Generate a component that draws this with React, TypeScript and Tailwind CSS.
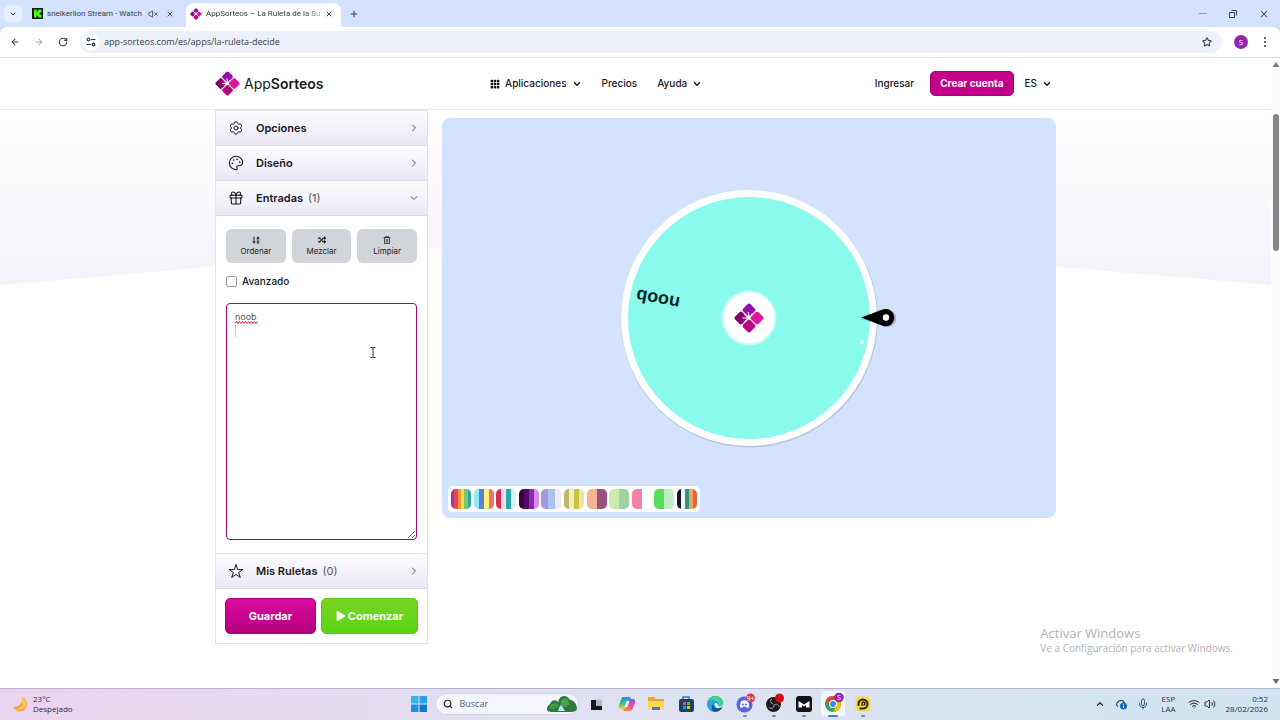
import { useState } from "react"
import type { ReactNode } from "react"
import { ArrowLeft, ArrowRight, ChevronDown, ChevronUp, ChevronRight, Gift, Mic, Palette, Plus, RotateCw, Search, Star, Volume2, VolumeX, Wifi, X } from "lucide-react"
import { BsGrid3X3GapFill } from "react-icons/bs"
import { FaPlay, FaRandom, FaRegTrashAlt, FaSortAlphaDown } from "react-icons/fa"
import { HiOutlineCog6Tooth } from "react-icons/hi2"
import { IoStarOutline } from "react-icons/io5"

const palettes = [
  ["#8e3fa0", "#e8455a", "#f49a3e", "#f3e04e", "#7fc765", "#2c9fb0"],
  ["#8fe9f2", "#5a7fd6", "#fff07a", "#e8736c"],
  ["#d62d50", "#f4dfe6", "#2ba9b0", "#d9f1f0"],
  ["#3a0340", "#540a62", "#8a2bb0", "#dc8af0"],
  ["#9a9bdc", "#a9c2f0", "#f0e9f6"],
  ["#bfb869", "#f2eebc", "#c9c243", "#ece8a4"],
  ["#f5b490", "#994f7c"],
  ["#cdeab0", "#a0d3a2"],
  ["#f582a8", "#ffffff"],
  ["#5bdc5e", "#c0eec2"],
  ["#12182b", "#f4f6f2", "#2c9585", "#f0a35c", "#e2663f"],
]

function Logo({ className }: { className: string }) {
  return (
    <svg viewBox="0 0 50 50" className={className} aria-hidden="true">
      <defs>
        <linearGradient id="logoTop" x1="0" y1="0" x2="1" y2="1">
          <stop offset="0" stopColor="#8c0aa6" />
          <stop offset="1" stopColor="#a30fc0" />
        </linearGradient>
        <linearGradient id="logoLeft" x1="0" y1="1" x2="1" y2="0">
          <stop offset="0" stopColor="#6c0660" />
          <stop offset="1" stopColor="#9a0a8c" />
        </linearGradient>
      </defs>
      <g transform="rotate(45 25 25)">
        <rect x="7" y="7" width="17" height="17" rx="3.500" fill="url(#logoTop)" />
        <rect x="26" y="7" width="17" height="17" rx="3.500" fill="#e0149c" />
        <rect x="26" y="26" width="17" height="17" rx="3.500" fill="#b5077f" />
        <rect x="7" y="26" width="17" height="17" rx="3.500" fill="url(#logoLeft)" />
      </g>
      <path d="M25 25 24 15M25 25 31 18M25 25 17 18M25 25 14 25M25 25 18 31" stroke="#fff" strokeWidth="2" />
      <circle cx="24" cy="24" r="3" fill="#fff" />
    </svg>
  )
}

function BrowserBar() {
  return (
    <div className="shrink-0 bg-[#d3e3fd] font-['Open_Sans',sans-serif] text-[#3a3f47]">
      <div className="flex h-[27px] items-center pr-[11px]">
        <button aria-label="Buscar pestañas" className="ml-1 flex h-[18px] w-[18px] items-center justify-center rounded-md bg-[#e6effd]">
          <ChevronDown className="h-2 w-2" strokeWidth={3} />
        </button>
        <div className="ml-2.5 flex w-[142px] items-center">
          <svg viewBox="0 0 11 11" className="h-[11px] w-[11px] shrink-0">
            <rect width="11" height="11" fill="#0d1a0b" />
            <path d="M2 1.500h2.500v2h1v-1h1v-1h3v2.500h-1v1h-1v1h1v1h1v2.500h-3v-1h-1v-1h-1v2H2z" fill="#53fc18" />
          </svg>
          <span className="ml-1 whitespace-nowrap font-['Roboto',sans-serif] text-[8px]">snelkerlion Stream - Watch</span>
          <VolumeX className="ml-1.5 h-2.5 w-2.5 shrink-0" />
          <button aria-label="Cerrar pestaña" className="ml-auto">
            <X className="h-2 w-2" strokeWidth={3} />
          </button>
        </div>
        <div className="ml-3 flex h-6 w-[155px] items-center self-end rounded-t-lg bg-white pr-2 pb-0.5 pl-1">
          <Logo className="h-3 w-3 shrink-0" />
          <span className="ml-1 bg-linear-to-r from-[#2a2d33] from-85% to-[#b9bcc2] bg-clip-text whitespace-nowrap font-['Roboto',sans-serif] text-[8px] text-transparent">AppSorteos – La Ruleta de la Su</span>
          <button aria-label="Cerrar pestaña" className="ml-auto">
            <X className="h-2 w-2" strokeWidth={3} />
          </button>
        </div>
        <button aria-label="Nueva pestaña" className="ml-2">
          <Plus className="h-2.5 w-2.5" strokeWidth={2.5} />
        </button>
        <div className="ml-auto flex items-center gap-[22px]">
          <button aria-label="Minimizar" className="flex h-2 w-2 items-center">
            <span className="h-px w-full bg-[#8f9bb0]" />
          </button>
          <button aria-label="Restaurar">
            <svg viewBox="0 0 8 8" className="h-2 w-2" fill="none" stroke="#333f55">
              <path d="M.5 2.500h5v5h-5zM2.500.5h5v5" />
            </svg>
          </button>
          <button aria-label="Cerrar">
            <X className="h-2.5 w-2.5" strokeWidth={2.5} />
          </button>
        </div>
      </div>
      <div className="flex h-[31px] items-center rounded-t-lg border-b border-[#dcdde0] bg-white pr-3.5 pl-2.5">
        <button aria-label="Atrás"><ArrowLeft className="h-2.5 w-2.5" strokeWidth={2.5} /></button>
        <button aria-label="Adelante" className="ml-3.5 text-[#a9adb5]"><ArrowRight className="h-2.5 w-2.5" strokeWidth={2.5} /></button>
        <button aria-label="Recargar" className="ml-3.5"><RotateCw className="h-2.5 w-2.5" strokeWidth={2.8} /></button>
        <div className="ml-3 flex h-[22px] flex-1 items-center rounded-full bg-[#edf1fa] pr-2.5 pl-0.5">
          <span className="flex h-[18px] w-[18px] items-center justify-center rounded-full bg-white">
            <svg viewBox="0 0 10 10" className="h-2.5 w-2.5" fill="none" stroke="#3a3f47" strokeWidth="1.200">
              <circle cx="2.500" cy="2.500" r="1.400" />
              <path d="M5 2.500h4.500M.5 7.500H5" />
              <circle cx="7.500" cy="7.500" r="1.400" />
            </svg>
          </span>
          <input aria-label="Dirección" defaultValue="app-sorteos.com/es/apps/la-ruleta-decide" className="ml-1 flex-1 bg-transparent text-[9px] outline-none" />
          <button aria-label="Favorito"><Star className="h-2.5 w-2.5" strokeWidth={2.5} /></button>
        </div>
        <button className="ml-3 flex h-[14px] w-[14px] items-center justify-center rounded-full bg-[#9526b0] text-[8px] text-white">S</button>
        <button aria-label="Menú" className="ml-4 flex flex-col gap-0.5">
          <span className="h-0.5 w-0.5 rounded-full bg-[#33363c]" />
          <span className="h-0.5 w-0.5 rounded-full bg-[#33363c]" />
          <span className="h-0.5 w-0.5 rounded-full bg-[#33363c]" />
        </button>
      </div>
    </div>
  )
}

function SiteHeader() {
  return (
    <header className="relative border-b border-[#e6e6e8] bg-white">
      <div className="mx-auto flex h-[51px] max-w-[841px] items-center justify-between pr-1 text-[10px] font-medium">
        <a href="#" className="flex items-center gap-1">
          <Logo className="h-[25px] w-[25px]" />
          <span className="text-[14px] font-normal">App<b className="font-semibold">Sorteos</b></span>
        </a>
        <nav className="mr-1.5 flex items-center gap-5">
          <button className="flex items-center gap-[5px]">
            <BsGrid3X3GapFill className="h-2.5 w-2.5" />
            Aplicaciones
            <ChevronDown className="h-2.5 w-2.5" strokeWidth={3.5} />
          </button>
          <a href="#">Precios</a>
          <button className="flex items-center gap-[5px]">
            Ayuda
            <ChevronDown className="h-2.5 w-2.5" strokeWidth={3.5} />
          </button>
        </nav>
        <div className="flex items-center">
          <a href="#">Ingresar</a>
          <button className="ml-4 h-[25px] rounded-[5px] border border-[#a4006f] bg-[#c4008b] px-[9px] font-bold text-white">Crear cuenta</button>
          <button className="ml-[11px] flex items-center gap-[5px]">
            ES
            <ChevronDown className="h-2.5 w-2.5" strokeWidth={3.5} />
          </button>
        </div>
      </div>
    </header>
  )
}

function SectionRow({ icon, label, count, open }: { icon: ReactNode; label: string; count?: number; open?: boolean }) {
  return (
    <button className="flex h-[35px] w-full items-center border-b border-[#dcd9e8] bg-linear-to-b from-[#fcfcfe] to-[#ebe8f6] pr-[7px] pl-3 text-left">
      {icon}
      <span className="ml-3 text-[11px] font-semibold">{label}</span>
      {count !== undefined && <span className="ml-[5px] text-[11px] text-[#55555c]">({count})</span>}
      {open ? (
        <ChevronDown className="ml-auto h-3 w-3 text-[#5c5c66]" />
      ) : (
        <ChevronRight className="ml-auto h-3 w-3 text-[#5c5c66]" />
      )}
    </button>
  )
}

function ToolButton({ icon, label }: { icon: ReactNode; label: string }) {
  return (
    <button className="flex h-[34px] flex-1 flex-col items-center justify-center gap-0.5 rounded-md bg-[#d1d4d9] text-[8px] leading-[11px] text-[#1f2328]">
      {icon}
      {label}
    </button>
  )
}

function Sidebar() {
  const [entries, setEntries] = useState("noob\n")
  const [advanced, setAdvanced] = useState(false)

  return (
    <aside className="w-[213px] shrink-0 self-start border border-[#e3e2ea] bg-white">
      <SectionRow icon={<HiOutlineCog6Tooth className="h-4 w-4" />} label="Opciones" />
      <SectionRow icon={<Palette className="h-4 w-4" strokeWidth={1.6} />} label="Diseño" />
      <SectionRow icon={<Gift className="h-4 w-4" strokeWidth={1.6} />} label="Entradas" count={1} open />

      <div className="px-2.5 py-[13px]">
        <div className="flex gap-1.5">
          <ToolButton icon={<FaSortAlphaDown className="h-2 w-2" />} label="Ordenar" />
          <ToolButton icon={<FaRandom className="h-2 w-2" />} label="Mezclar" />
          <ToolButton icon={<FaRegTrashAlt className="h-2 w-2" />} label="Limpiar" />
        </div>
        <label className="mt-2.5 flex h-4 items-center gap-[5px] text-[10px] font-medium">
          <input
            type="checkbox"
            checked={advanced}
            onChange={(e) => setAdvanced(e.target.checked)}
            className="h-[11px] w-[11px] appearance-none rounded-xs border border-[#9a9aa0] bg-white checked:bg-[#c4008b]"
          />
          Avanzado
        </label>
        <div className="relative mt-3.5">
          <textarea
            aria-label="Entradas"
            value={entries}
            onChange={(e) => setEntries(e.target.value)}
            spellCheck={false}
            className="block h-[237px] w-full resize-y rounded-[4px] border border-[#a3046f] bg-white px-2 py-1.5 text-[9px] leading-[14px] text-[#55555c] outline-none"
          />
          {/* spelling mark, caret and mouse pointer */}
          <svg viewBox="0 0 24 3" className="absolute top-[18px] left-[9px] h-[3px] w-6" fill="none" stroke="#d0213f">
            <path d="M0 2.500 1.500.5 3 2.500 4.500.5 6 2.500 7.500.5 9 2.500 10.500.5 12 2.500 13.500.5 15 2.500 16.500.5 18 2.500 19.500.5 21 2.500 22.500.5" />
          </svg>
          <span className="absolute top-[22px] left-[9px] h-3 w-px bg-[#c9c9ce]" />
          <svg viewBox="0 0 6 11" className="absolute top-11 left-36 h-[11px] w-1.5" fill="none" stroke="#333">
            <path d="M.5.5h2l.5.5.5-.5h2M3 1v9M.5 10.500h2l.5-.5.5.5h2" />
          </svg>
        </div>
      </div>

      <div className="border-t border-[#e3e2ea]">
        <SectionRow icon={<IoStarOutline className="h-4 w-4" />} label="Mis Ruletas" count={0} />
      </div>
      <div className="flex gap-[5px] px-[9px] py-[9px] text-[11px] font-bold text-white">
        <button className="h-9 w-[91px] rounded-[5px] border border-[#a8037a] bg-linear-to-b from-[#dc0ba0] to-[#b3007c]">Guardar</button>
        <button className="flex h-9 flex-1 items-center justify-center gap-0.5 rounded-[5px] border border-[#62c41d] bg-linear-to-b from-[#79d422] to-[#57d516]">
          <FaPlay className="h-2.5 w-2.5" />
          Comenzar
        </button>
      </div>
    </aside>
  )
}

function Wheel() {
  return (
    <svg viewBox="-150 -132 300 264" className="h-[264px] w-[300px]" role="img" aria-label="Ruleta">
      <circle cx=".5" cy="1" r="128.500" fill="#a9b8d2" opacity="0.700" />
      <circle r="128" fill="#fff" />
      <circle r="121" fill="#8afaed" />
      <text transform="rotate(191)" x="93" y="7" textAnchor="middle" fontFamily="'Liberation Sans', Arial, sans-serif" fontWeight="700" fontSize="18" fill="#08252b">noob</text>
      <circle r="27.500" fill="#c6fcf6" />
      <circle r="25.500" fill="#fff" />
      <svg x="-15" y="-15" width="30" height="30">
        <Logo className="h-[30px] w-[30px]" />
      </svg>
      <circle cx="113" cy="24" r="2" fill="#e4fffb" />
      <path d="M113 1 134-7a8.700 8.700 0 1 1 3 16z" fill="#7f93a8" opacity="0.500" />
      <path d="M112-.5 133-8.300a8.700 8.700 0 1 1 2 16.500z" fill="#000" />
      <circle cx="137" cy="-.5" r="3.200" fill="#fff" />
    </svg>
  )
}

function WheelPanel() {
  return (
    <section className="relative mt-2 flex h-[400px] min-w-0 flex-1 items-center justify-center rounded-lg bg-[#d3e3fd]">
      <Wheel />
      {/* Color palettes */}
      <div className="absolute bottom-1.5 left-1.5 flex h-[26px] w-[252px] items-center justify-between rounded-[5px] bg-white px-[3px]">
        {palettes.map((colors, i) => (
          <button key={i} aria-label={`Paleta ${i + 1}`} className="flex h-5 w-5 overflow-hidden rounded-[5px] shadow-[0_0_1px_#c8c8d0]">
            {colors.map((c) => (
              <span key={c} className="h-full flex-1" style={{ backgroundColor: c }} />
            ))}
          </button>
        ))}
      </div>
    </section>
  )
}

function PageScrollbar() {
  return (
    <div className="flex w-[9px] shrink-0 flex-col items-center bg-[#fcfcfc] py-1">
      <svg viewBox="0 0 8 5" className="h-[5px] w-2"><path d="M4 0 7.500 5h-7z" fill="#7d7d7d" /></svg>
      <span className="mt-[47px] h-[137px] w-1.5 rounded-full bg-[#868686]" />
      <svg viewBox="0 0 8 5" className="mt-auto h-[5px] w-2"><path d="M4 5 7.500 0h-7z" fill="#6d6d6d" /></svg>
    </div>
  )
}

function TaskItem({ label, children, mark }: { label: string; children: ReactNode; mark?: string }) {
  return (
    <button aria-label={label} className="relative flex h-full items-center justify-center">
      <svg viewBox="0 0 20 20" className="h-5 w-5 overflow-visible">{children}</svg>
      {mark && <span className={mark} />}
    </button>
  )
}

const dot = "absolute bottom-0.5 h-0.5 w-1 rounded-full bg-[#7d8492]"

function Taskbar() {
  return (
    <footer className="flex h-8 shrink-0 items-center border-t border-[#b7b1cd] bg-linear-to-r from-[#ead3f0] via-[#dfe2f3] to-[#cfe5f1] pb-px font-['Open_Sans',sans-serif] text-[8px] leading-[10px] text-[#2b2d38]">
      <div className="flex flex-1 items-center gap-[5px] pl-3">
        <svg viewBox="0 0 16 16" className="h-4 w-4">
          <path d="M10 1a7.300 7.300 0 1 1-9 9.500A7.500 7.500 0 0 0 10 1z" fill="#f3a53a" />
          <path d="M10 1c4 2 5.500 5.500 4 9-2 4-8 5-11 3 4 .5 9-2.500 7-12z" fill="#f9c05c" />
        </svg>
        <div>
          <p>23°C</p>
          <p>Despejado</p>
        </div>
      </div>

      <div className="flex h-full items-center">
        <button aria-label="Inicio" className="flex w-8 justify-center">
          <svg viewBox="0 0 16 16" className="h-4 w-4">
            <path d="M0 0h7.500v7.500H0z" fill="#35b5ee" />
            <path d="M8.500 0H16v7.500H8.500z" fill="#27a2e6" />
            <path d="M0 8.500h7.500V16H0z" fill="#1d92de" />
            <path d="M8.500 8.500H16V16H8.500z" fill="#1179cf" />
          </svg>
        </button>
        <label className="flex h-[22px] w-[144px] items-center rounded-full border border-[#cfd3e6] bg-[#f4f6fc] pl-[7px]">
          <Search className="h-2.5 w-2.5" strokeWidth={2.8} />
          <input placeholder="Buscar" aria-label="Buscar" className="ml-[7px] w-[84px] bg-transparent text-[9px] outline-none placeholder:text-[#5b5e68]" />
          <svg viewBox="0 0 32 18" className="ml-0.5 h-[18px] w-8">
            <path d="M1 14c0-3 2-4 3-5 1-4 6-5 8-2 1-4 3-6 6-6s5 2 6 4c4 0 7 4 7 9-1 3-5 3-8 3H7c-3 0-6 0-6-3z" fill="#2a7d3e" />
            <path d="M15 6c2-4 8-3 7 1 3 2 1 5-2 5-4 0-6-3-5-6z" fill="#4aa253" />
            <path d="M4 11c1-3 6-4 8-1 1 2-1 4-4 4s-5-1-4-3z" fill="#47974b" />
            <path d="M12 16c1-4 2-5 3-6 2 1 2 4 4 6z" fill="#bfe7f2" />
            <path d="m21 10 1 5 1-5zM9 12v4h1v-4z" fill="#7a4b2a" />
          </svg>
        </label>
        <div className="ml-1 grid h-full w-[295px] grid-cols-10">
          <TaskItem label="Vista de tareas">
            <path d="M8 3h8v10H8z" fill="#d9dbe0" />
            <path d="M4 6h5v6h6v4H4z" fill="#17181d" />
            <path d="M9 6h6v6H9z" fill="#b3b6be" />
          </TaskItem>
          <TaskItem label="Copilot">
            <defs>
              <linearGradient id="copA" x1="0" y1="0" x2="0" y2="1"><stop stopColor="#1e8ff2" /><stop offset=".5" stopColor="#35c08d" /><stop offset="1" stopColor="#f3d13b" /></linearGradient>
              <linearGradient id="copB" x1="0" y1="0" x2="0" y2="1"><stop stopColor="#7c5cf0" /><stop offset=".6" stopColor="#e84fa4" /><stop offset="1" stopColor="#f58b3d" /></linearGradient>
            </defs>
            <path d="M6 3h6c2 0 2 2 1.500 3L10 13c-.5 1-1 2-3 2H4c-2 0-2.500-2-2-4L4 6c.5-2 1-3 2-3z" fill="url(#copA)" />
            <path d="M13 5h3c2 0 2.500 2 2 4L16 14c-.5 2-1 3-3 3H8c-1.500 0-2-1-1.500-2 2 0 3-.5 3.500-2l2-6c.3-1 .5-2 1-2z" fill="url(#copB)" />
            <path d="M9.500 7h3l-2 6h-3z" fill="#f5f1fb" />
          </TaskItem>
          <TaskItem label="Explorador">
            <path d="M2 4q0-1 1-1h5l2 2h7q1 0 1 1v9H2z" fill="#e9a829" />
            <path d="M2 7h16v8q0 1-1 1H3q-1 0-1-1z" fill="#fbd45c" />
            <path d="M6 13h8v3H6z" fill="#2d89d8" />
          </TaskItem>
          <TaskItem label="Microsoft Store">
            <path d="M7 5V3h6v2" fill="none" stroke="#2a7fc4" strokeWidth="1.500" />
            <rect x="3" y="5" width="15" height="13" rx="2" fill="#1c3f66" />
            <path d="M7 8h3v3H7z" fill="#f25022" /><path d="M11 8h3v3h-3z" fill="#7fba00" />
            <path d="M7 12h3v3H7z" fill="#00a4ef" /><path d="M11 12h3v3h-3z" fill="#ffb900" />
          </TaskItem>
          <TaskItem label="Edge">
            <circle cx="10" cy="10" r="8" fill="#1783cf" />
            <path d="M2 10C2 4 7 2 10 2c5 0 8 3 8 7 0 3-3 4-5 3 1-3-1-5-4-5-3 0-6 1-7 3z" fill="#45cf96" />
            <path d="M2.500 8C5 4 12 5 12 10c-3-2-6 1-4 7-4-1-6-5-5.500-9z" fill="#27a6dc" />
            <path d="M8 10c-1 4 3 6 9 4-2 3-6 4-8 3.500-3-2-3-5-1-7.500z" fill="#125096" />
            <path d="M9.500 10c1-2 4-1 3.500 2 2 1 4 0 5-2 0 3-3 4-5 4s-4-2-3.500-4z" fill="#e9f5fb" />
          </TaskItem>
          <TaskItem label="Discord" mark={dot}>
            <circle cx="9.500" cy="10.500" r="8" fill="#5865e4" />
            <path d="M5 13c0-3 .5-5 1.500-6 2-1 4-1 6 0 1 1 1.500 3 1.500 6-1 1-2 1-2.500.5L11 12.500H8L7.500 13.500C7 14 6 14 5 13z" fill="#fff" />
            <circle cx="8" cy="10.500" r="1" fill="#5865e4" /><circle cx="11" cy="10.500" r="1" fill="#5865e4" />
            <circle cx="15.500" cy="4" r="4.500" fill="#d63852" />
            <text x="15.500" y="6.500" fontSize="7" textAnchor="middle" fill="#fff">9+</text>
          </TaskItem>
          <TaskItem label="OBS Studio" mark={dot}>
            <circle cx="9.500" cy="10.500" r="7.500" fill="#1d1b1e" />
            <path d="M9 10C6 9 6 6 8 5m2 6c3-2 5 0 5 2m-5-2c0 4-4 4-5 2" fill="none" stroke="#a8a8ac" strokeWidth="1" />
            <circle cx="15.500" cy="4" r="4.500" fill="#e0060f" />
          </TaskItem>
          <TaskItem label="Medal" mark={dot}>
            <rect x="2" y="2" width="16" height="16" rx="3" fill="#121214" />
            <path d="M4.500 7 10 10.500 15.500 7v6.500H12V11l-2 1.500L8 11v2.500H4.500z" fill="#fff" />
          </TaskItem>
          <TaskItem label="Chrome" mark="absolute bottom-0.5 h-0.5 w-2.5 rounded-full bg-[#3d7fd0]">
            <rect x="-2" y="-3" width="24" height="25" rx="3" fill="#f5f6fb" />
            <circle cx="10" cy="10" r="8" fill="#34a853" />
            <path d="M3.100 6A8 8 0 0 1 16.900 6L10 6 6.500 12z" fill="#ea4335" />
            <path d="M16.900 6A8 8 0 0 1 10 18L13.500 12 10 6z" fill="#fbbc05" />
            <circle cx="10" cy="10" r="4" fill="#fff" /><circle cx="10" cy="10" r="3" fill="#4285f4" />
            <circle cx="16" cy="3.500" r="4.800" fill="#9526b0" />
            <text x="16" y="6" fontSize="7" textAnchor="middle" fill="#fff">S</text>
          </TaskItem>
          <TaskItem label="Ruleta" mark={dot}>
            <rect x="2.500" y="2.500" width="15" height="15" rx="4" fill="#fbd84a" />
            <path d="M6.500 14.500h3.500a4.500 4.500 0 1 0-4.500-4.500v2" fill="none" stroke="#2a240f" strokeWidth="2" />
            <path d="M9 12V9.500a1.500 1.500 0 1 1 1.500 1.500" fill="none" stroke="#2a240f" strokeWidth="1.500" />
          </TaskItem>
        </div>
      </div>

      <div className="flex flex-1 items-center justify-end pr-3">
        <ChevronUp className="h-2.5 w-2.5" strokeWidth={3} />
        <svg viewBox="0 0 12 12" className="ml-2.5 h-3 w-3">
          <path d="M3 8.500A2.500 2.500 0 0 1 3 4a3.600 3.600 0 0 1 6.500 1" fill="none" stroke="#30465c" strokeWidth="1.200" />
          <circle cx="8.500" cy="8" r="3.500" fill="#1565b0" />
          <path d="M8.500 7.500v2.500M8.500 5.800v.9" stroke="#fff" />
        </svg>
        <Mic className="ml-2.5 h-3 w-3 text-[#2f5c8c]" />
        <div className="ml-3 text-center">
          <p>ESP</p>
          <p>LAA</p>
        </div>
        <Wifi className="ml-3 h-3 w-3" />
        <Volume2 className="ml-1 h-3 w-3" />
        <div className="ml-2.5 text-right">
          <p>0:52</p>
          <p>28/02/2026</p>
        </div>
      </div>
    </footer>
  )
}

export default function App() {
  return (
    <div className="flex h-screen flex-col overflow-hidden bg-white font-['Inter',sans-serif] text-[#18181b]">
      <BrowserBar />
      <div className="flex min-h-0 flex-1">
        <div className="relative min-w-0 flex-1 overflow-hidden">
          {/* Slanted backdrop */}
          <div className="absolute inset-x-0 top-0 h-[227px] bg-linear-to-b from-white from-25% to-[#f3f2fa] [clip-path:polygon(0_0,100%_0,100%_100%,50%_76%,0_100%)]" />
          <SiteHeader />
          <main className="relative mx-auto flex max-w-[841px] gap-3.5">
            <Sidebar />
            <WheelPanel />
          </main>
          <div className="pointer-events-none absolute right-[38px] bottom-[33px] font-['Open_Sans',sans-serif] text-[#b3b3b3]">
            <p className="text-[13px] leading-4">Activar Windows</p>
            <p className="text-[10px] leading-[14px]">Ve a Configuración para activar Windows.</p>
          </div>
        </div>
        <PageScrollbar />
      </div>
      <Taskbar />
    </div>
  )
}
